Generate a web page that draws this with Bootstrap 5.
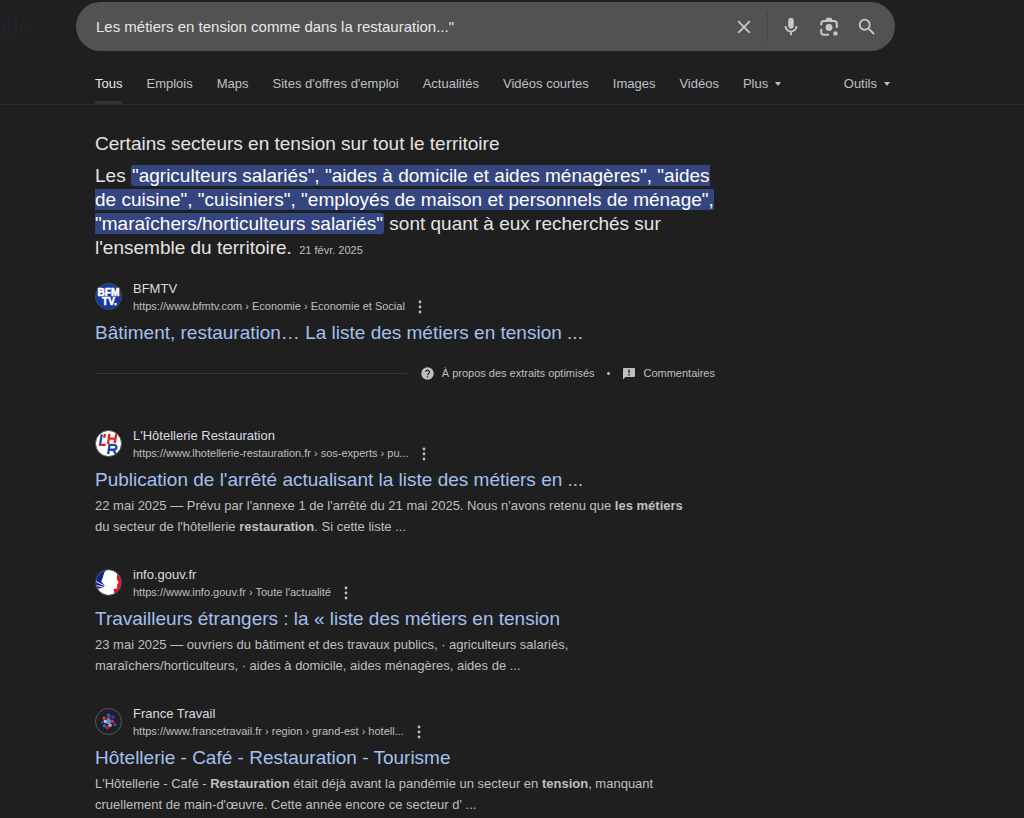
<!DOCTYPE html>
<html lang="fr" data-bs-theme="dark">
<head>
<meta charset="utf-8">
<meta name="viewport" content="width=device-width, initial-scale=1">
<title>Les métiers en tension comme dans la restauration</title>
<link href="https://cdn.jsdelivr.net/npm/bootstrap@5.3.0/dist/css/bootstrap.min.css" rel="stylesheet">
<style>
  body { background: #1f1f1f; color: #e3e3e3; font-family: "Liberation Sans", Arial, sans-serif; font-size: 13px; line-height: 21px; overflow-x: hidden; }
  .brand-word { left: 0; top: 8px; font: 24px/32px "Open Sans", sans-serif; color: #22232c; text-decoration: none; }
  .main-col { padding-left: 95px; }
  .search-wrap { padding: 2px 16px 0 76px; }
  .search-box { max-width: 819px; height: 49px; background: #525252; padding: 0 16px 0 20px; }
  .search-box input { background: transparent; border: 0; outline: 0; color: #e8e8e8; font-size: 15px; min-width: 0; padding: 0; }
  .search-box .btn { width: 24px; height: 24px; padding: 0; color: #c8c8c8; line-height: 1; }
  .search-box svg { width: 22px; height: 22px; fill: currentColor; }
  .tool-group { gap: 14px; }
  .box-rule { width: 1px; height: 30px; background: #454545; margin: 0 11px; }
  .tabs-row { border-bottom: 1px solid #2e2e2e; margin-top: 17px; height: 37px; }
  .tabs-inner { max-width: 795px; height: 36px; }
  .tab-list { gap: 24px; }
  .tab-link, .tab-btn { color: #bdc1c6; text-decoration: none; font-size: 13px; line-height: 32px; white-space: nowrap; padding: 0 0 1px; border: 0; background: none; border-bottom: 3px solid transparent; }
  .tab-link.active { color: #e8e8e8; border-bottom-color: #333; }
  .tab-btn::after { content: ""; display: inline-block; margin-left: 7px; vertical-align: 2px; border: 3px solid transparent; border-top: 4px solid; border-bottom: 0; }
  .results { max-width: 620px; padding-top: 27px; }
  .lead-title, .answer { font-size: 19px; line-height: 24px; font-weight: 400; margin: 0; color: #e3e3e3; }
  .answer { margin-top: 8px; }
  .hl { background: #34457f; color: #fff; border-radius: 3px; padding: 0 1px; }
  .answer time { font-size: 11px; color: #bfbfbf; margin-left: 2px; }
  .fav { width: 27px; height: 27px; flex: none; margin: 3px 11px 0 0; }
  .site { color: #dadce0; font-size: 13px; line-height: 18px; }
  .crumb { color: #bfbfbf; font-size: 11px; line-height: 17px; }
  .dots { border: 0; background: none; padding: 0; width: 16px; height: 16px; margin-left: 7px; color: #bfbfbf; display: flex; }
  .result-title { font-size: 19px; line-height: 26px; font-weight: 400; margin: 5px 0 0; }
  .result-title a { color: #a3c0f0; text-decoration: none; }
  .snippet { color: #bfbfbf; margin: 2px 0 0; max-width: 602px; }
  .featured { margin-top: 18px; }
  .about { font-size: 11px; line-height: 16px; color: #bfbfbf; margin: 19px 0 46px; }
  .about a { color: inherit; text-decoration: none; }
  .about-rule { height: 1px; background: #353535; margin-right: 14px; }
  .result { margin-bottom: 29px; }
</style>
</head>
<body>
<svg class="d-none" aria-hidden="true">
  <symbol id="kebab" viewBox="0 0 16 16"><g fill="currentColor"><circle cx="8" cy="3" r="1.4"/><circle cx="8" cy="8" r="1.4"/><circle cx="8" cy="13" r="1.4"/></g></symbol>
</svg>
<header class="position-relative">
  <a href="#" class="brand-word position-absolute">gle</a>
  <div class="search-wrap">
    <form class="search-box rounded-pill d-flex align-items-center" role="search">
      <input class="flex-grow-1" type="text" aria-label="Rechercher" value="Les métiers en tension comme dans la restauration...&quot;">
      <button type="button" class="btn" aria-label="Effacer"><svg viewBox="0 0 24 24"><path d="M19 6.4 17.6 5 12 10.6 6.4 5 5 6.400 10.600 12 5 17.600 6.400 19 12 13.400 17.600 19 19 17.600 13.400 12z"/></svg></button>
      <span class="box-rule"></span>
      <div class="tool-group d-flex">
        <button type="button" class="btn" aria-label="Recherche vocale"><svg viewBox="0 0 24 24"><path d="M12 14c1.660 0 3-1.340 3-3V5c0-1.660-1.340-3-3-3S9 3.340 9 5v6c0 1.660 1.340 3 3 3z"/><path d="M17 11c0 2.760-2.240 5-5 5s-5-2.240-5-5H5c0 3.530 2.610 6.430 6 6.920V21h2v-3.080c3.390-.49 6-3.390 6-6.920z"/></svg></button>
        <button type="button" class="btn" aria-label="Recherche par image"><svg viewBox="0 0 24 24"><path d="M3.500 10V8.500a3 3 0 0 1 3-3h11a3 3 0 0 1 3 3V13M3.500 14v3.500a3 3 0 0 0 3 3H12" fill="none" stroke="currentColor" stroke-width="2.200"/><path d="M8 5l1.500-3h5L16 5z"/><circle cx="12" cy="12.500" r="3.700"/><circle cx="19" cy="19" r="2.400"/></svg></button>
        <button type="submit" class="btn" aria-label="Rechercher"><svg viewBox="0 0 24 24"><path d="M15.500 14h-.79l-.28-.27A6.470 6.470 0 0 0 16 9.500 6.500 6.500 0 1 0 9.500 16c1.610 0 3.090-.59 4.230-1.570l.27.28v.79l5 4.990L20.490 19l-4.990-5zm-6 0C7.010 14 5 11.990 5 9.500S7.010 5 9.500 5 14 7.010 14 9.500 11.990 14 9.500 14z"/></svg></button>
      </div>
    </form>
  </div>
  <nav class="tabs-row main-col" aria-label="Filtres">
    <div class="tabs-inner d-flex align-items-start justify-content-between">
      <div class="tab-list d-flex">
        <a class="tab-link active" href="#">Tous</a><a class="tab-link" href="#">Emplois</a><a class="tab-link" href="#">Maps</a><a class="tab-link" href="#">Sites d'offres d'emploi</a><a class="tab-link" href="#">Actualités</a><a class="tab-link" href="#">Vidéos courtes</a><a class="tab-link" href="#">Images</a><a class="tab-link" href="#">Vidéos</a><button type="button" class="tab-btn">Plus</button>
      </div>
      <button type="button" class="tab-btn">Outils</button>
    </div>
  </nav>
</header>
<main class="main-col">
  <div class="results" id="results">
    <section>
      <h2 class="lead-title">Certains secteurs en tension sur tout le territoire</h2>
      <p class="answer">Les <span class="hl">"agriculteurs salariés", "aides à domicile et aides ménagères", "aides de cuisine", "cuisiniers", "employés de maison et personnels de ménage", "maraîchers/horticulteurs salariés"</span> sont quant à eux recherchés sur l'ensemble du territoire. <time datetime="2025-02-21">21 févr. 2025</time></p>
    </section>
    <article class="featured">
      <div class="d-flex align-items-start">
        <svg class="fav" viewBox="0 0 28 28"><circle cx="14" cy="14" r="13.500" fill="#1439a0" stroke="#4b4d55"/><g fill="#fff" stroke="#fff" stroke-width=".6" font-family="Liberation Sans, sans-serif" font-weight="700" font-size="10.500" text-anchor="middle"><text x="14" y="13">BFM</text><text x="15" y="22.500">TV.</text></g></svg>
        <div><div class="site">BFMTV</div><div class="d-flex align-items-center"><cite class="crumb fst-normal">https://www.bfmtv.com › Economie › Economie et Social</cite><button type="button" class="dots" aria-label="Plus d'infos"><svg width="16" height="16"><use href="#kebab"/></svg></button></div></div>
      </div>
      <h3 class="result-title"><a href="#">Bâtiment, restauration… La liste des métiers en tension ...</a></h3>
      <div class="about d-flex align-items-center">
        <span class="about-rule flex-grow-1"></span>
        <a href="#" class="d-flex align-items-center gap-2"><svg width="13" height="13" viewBox="0 0 14 14"><circle cx="7" cy="7" r="6.700" fill="#bfbfbf"/><path d="M4.900 5.500a2.100 2.100 0 1 1 3.200 1.800C7.300 7.800 7 8.100 7 9M7 10v1.400" stroke="#1f1f1f" stroke-width="1.300" fill="none"/></svg>À propos des extraits optimisés</a>
        <span class="mx-2 px-1">•</span>
        <a href="#" class="d-flex align-items-center gap-2"><svg width="13" height="13" viewBox="0 0 13 13"><path d="M2 1h10a1 1 0 0 1 1 1v7a1 1 0 0 1-1 1H3.500L1 12.500V2a1 1 0 0 1 1-1z" fill="#bfbfbf"/><path d="M7 2.500v3.500M7 7v1.500" stroke="#1f1f1f" stroke-width="1.400"/></svg>Commentaires</a>
      </div>
    </article>
    <article class="result">
      <div class="d-flex align-items-start">
        <svg class="fav" viewBox="0 0 28 28"><circle cx="14" cy="14" r="13.500" fill="#fff" stroke="#4b4d55"/><g fill="none" stroke-width="2.400"><path d="M7 4.500 5.300 14.500" stroke="#1c4aa0"/><path d="M4 15.500h7M10.300 4l-.8 4M15 4l-1.500 10.500M22 4l-1.500 9.500M14.500 9h7" stroke="#e3211c"/><path d="M13.700 25l1.300-9.500h4.500c4 0 3.500 5-.5 5h-4.500M19 20.500l2.500 4.500" stroke="#1c4aa0"/></g></svg>
        <div><div class="site">L'Hôtellerie Restauration</div><div class="d-flex align-items-center"><cite class="crumb fst-normal">https://www.lhotellerie-restauration.fr › sos-experts › pu...</cite><button type="button" class="dots" aria-label="Plus d'infos"><svg width="16" height="16"><use href="#kebab"/></svg></button></div></div>
      </div>
      <h3 class="result-title"><a href="#">Publication de l'arrêté actualisant la liste des métiers en ...</a></h3>
      <p class="snippet">22 mai 2025 — Prévu par l'annexe 1 de l'arrêté du 21 mai 2025. Nous n'avons retenu que <b>les métiers</b> du secteur de l'hôtellerie <b>restauration</b>. Si cette liste ...</p>
    </article>
    <article class="result">
      <div class="d-flex align-items-start">
        <svg class="fav" viewBox="0 0 28 28"><clipPath id="round"><circle cx="14" cy="14" r="13"/></clipPath><g clip-path="url(#round)"><path fill="#fff" d="M0 0h28v28H0z"/><path fill="#11208c" d="M0 0h12L9.500 4 8 9l-1.500 4 3.500 4-2 3-8 2z"/><path fill="#e1141c" d="M20 0h8v28h-9l1-4-1-3 4-1v-4l1.500-2-2-4 .5-4z"/><path d="M1 13l8 4M1 17l8 2M1 21l8-1" stroke="#fff" stroke-width="1"/></g><circle cx="14" cy="14" r="13.500" fill="none" stroke="#4b4d55"/></svg>
        <div><div class="site">info.gouv.fr</div><div class="d-flex align-items-center"><cite class="crumb fst-normal">https://www.info.gouv.fr › Toute l'actualité</cite><button type="button" class="dots" aria-label="Plus d'infos"><svg width="16" height="16"><use href="#kebab"/></svg></button></div></div>
      </div>
      <h3 class="result-title"><a href="#">Travailleurs étrangers : la « liste des métiers en tension</a></h3>
      <p class="snippet">23 mai 2025 — ouvriers du bâtiment et des travaux publics, · agriculteurs salariés, maraîchers/horticulteurs, · aides à domicile, aides ménagères, aides de ...</p>
    </article>
    <article class="result mb-0">
      <div class="d-flex align-items-start">
        <svg class="fav" viewBox="0 0 28 28"><circle cx="14" cy="14" r="13.500" fill="#1f1f28" stroke="#5a5c62"/><g><circle cx="14" cy="14" r="2.800" fill="#25a8e0"/><circle cx="14" cy="7.500" r="2" fill="#2856c8"/><circle cx="18.500" cy="9.500" r="1.900" fill="#2d3fae"/><circle cx="9.500" cy="10.500" r="1.700" fill="#e4364f"/><circle cx="10.500" cy="14" r="1.700" fill="#f4a9b8"/><circle cx="18" cy="14" r="1.900" fill="#d22846"/><circle cx="20.500" cy="17" r="1.700" fill="#2c52c0"/><circle cx="15.500" cy="18" r="1.900" fill="#f08aa0"/><circle cx="10" cy="18.500" r="1.900" fill="#2b62d4"/><circle cx="13" cy="20.500" r="1.600" fill="#c9244a"/><circle cx="7.500" cy="15" r="1.400" fill="#2c3fa8"/><circle cx="14" cy="11" r="1.400" fill="#e04a5e"/></g></svg>
        <div><div class="site">France Travail</div><div class="d-flex align-items-center"><cite class="crumb fst-normal">https://www.francetravail.fr › region › grand-est › hotell...</cite><button type="button" class="dots" aria-label="Plus d'infos"><svg width="16" height="16"><use href="#kebab"/></svg></button></div></div>
      </div>
      <h3 class="result-title"><a href="#">Hôtellerie - Café - Restauration - Tourisme</a></h3>
      <p class="snippet">L'Hôtellerie - Café - <b>Restauration</b> était déjà avant la pandémie un secteur en <b>tension</b>, manquant cruellement de main-d'œuvre. Cette année encore ce secteur d' ...</p>
    </article>
  </div>
</main>
<script src="https://cdn.jsdelivr.net/npm/bootstrap@5.3.0/dist/js/bootstrap.bundle.min.js"></script>
</body>
</html>
